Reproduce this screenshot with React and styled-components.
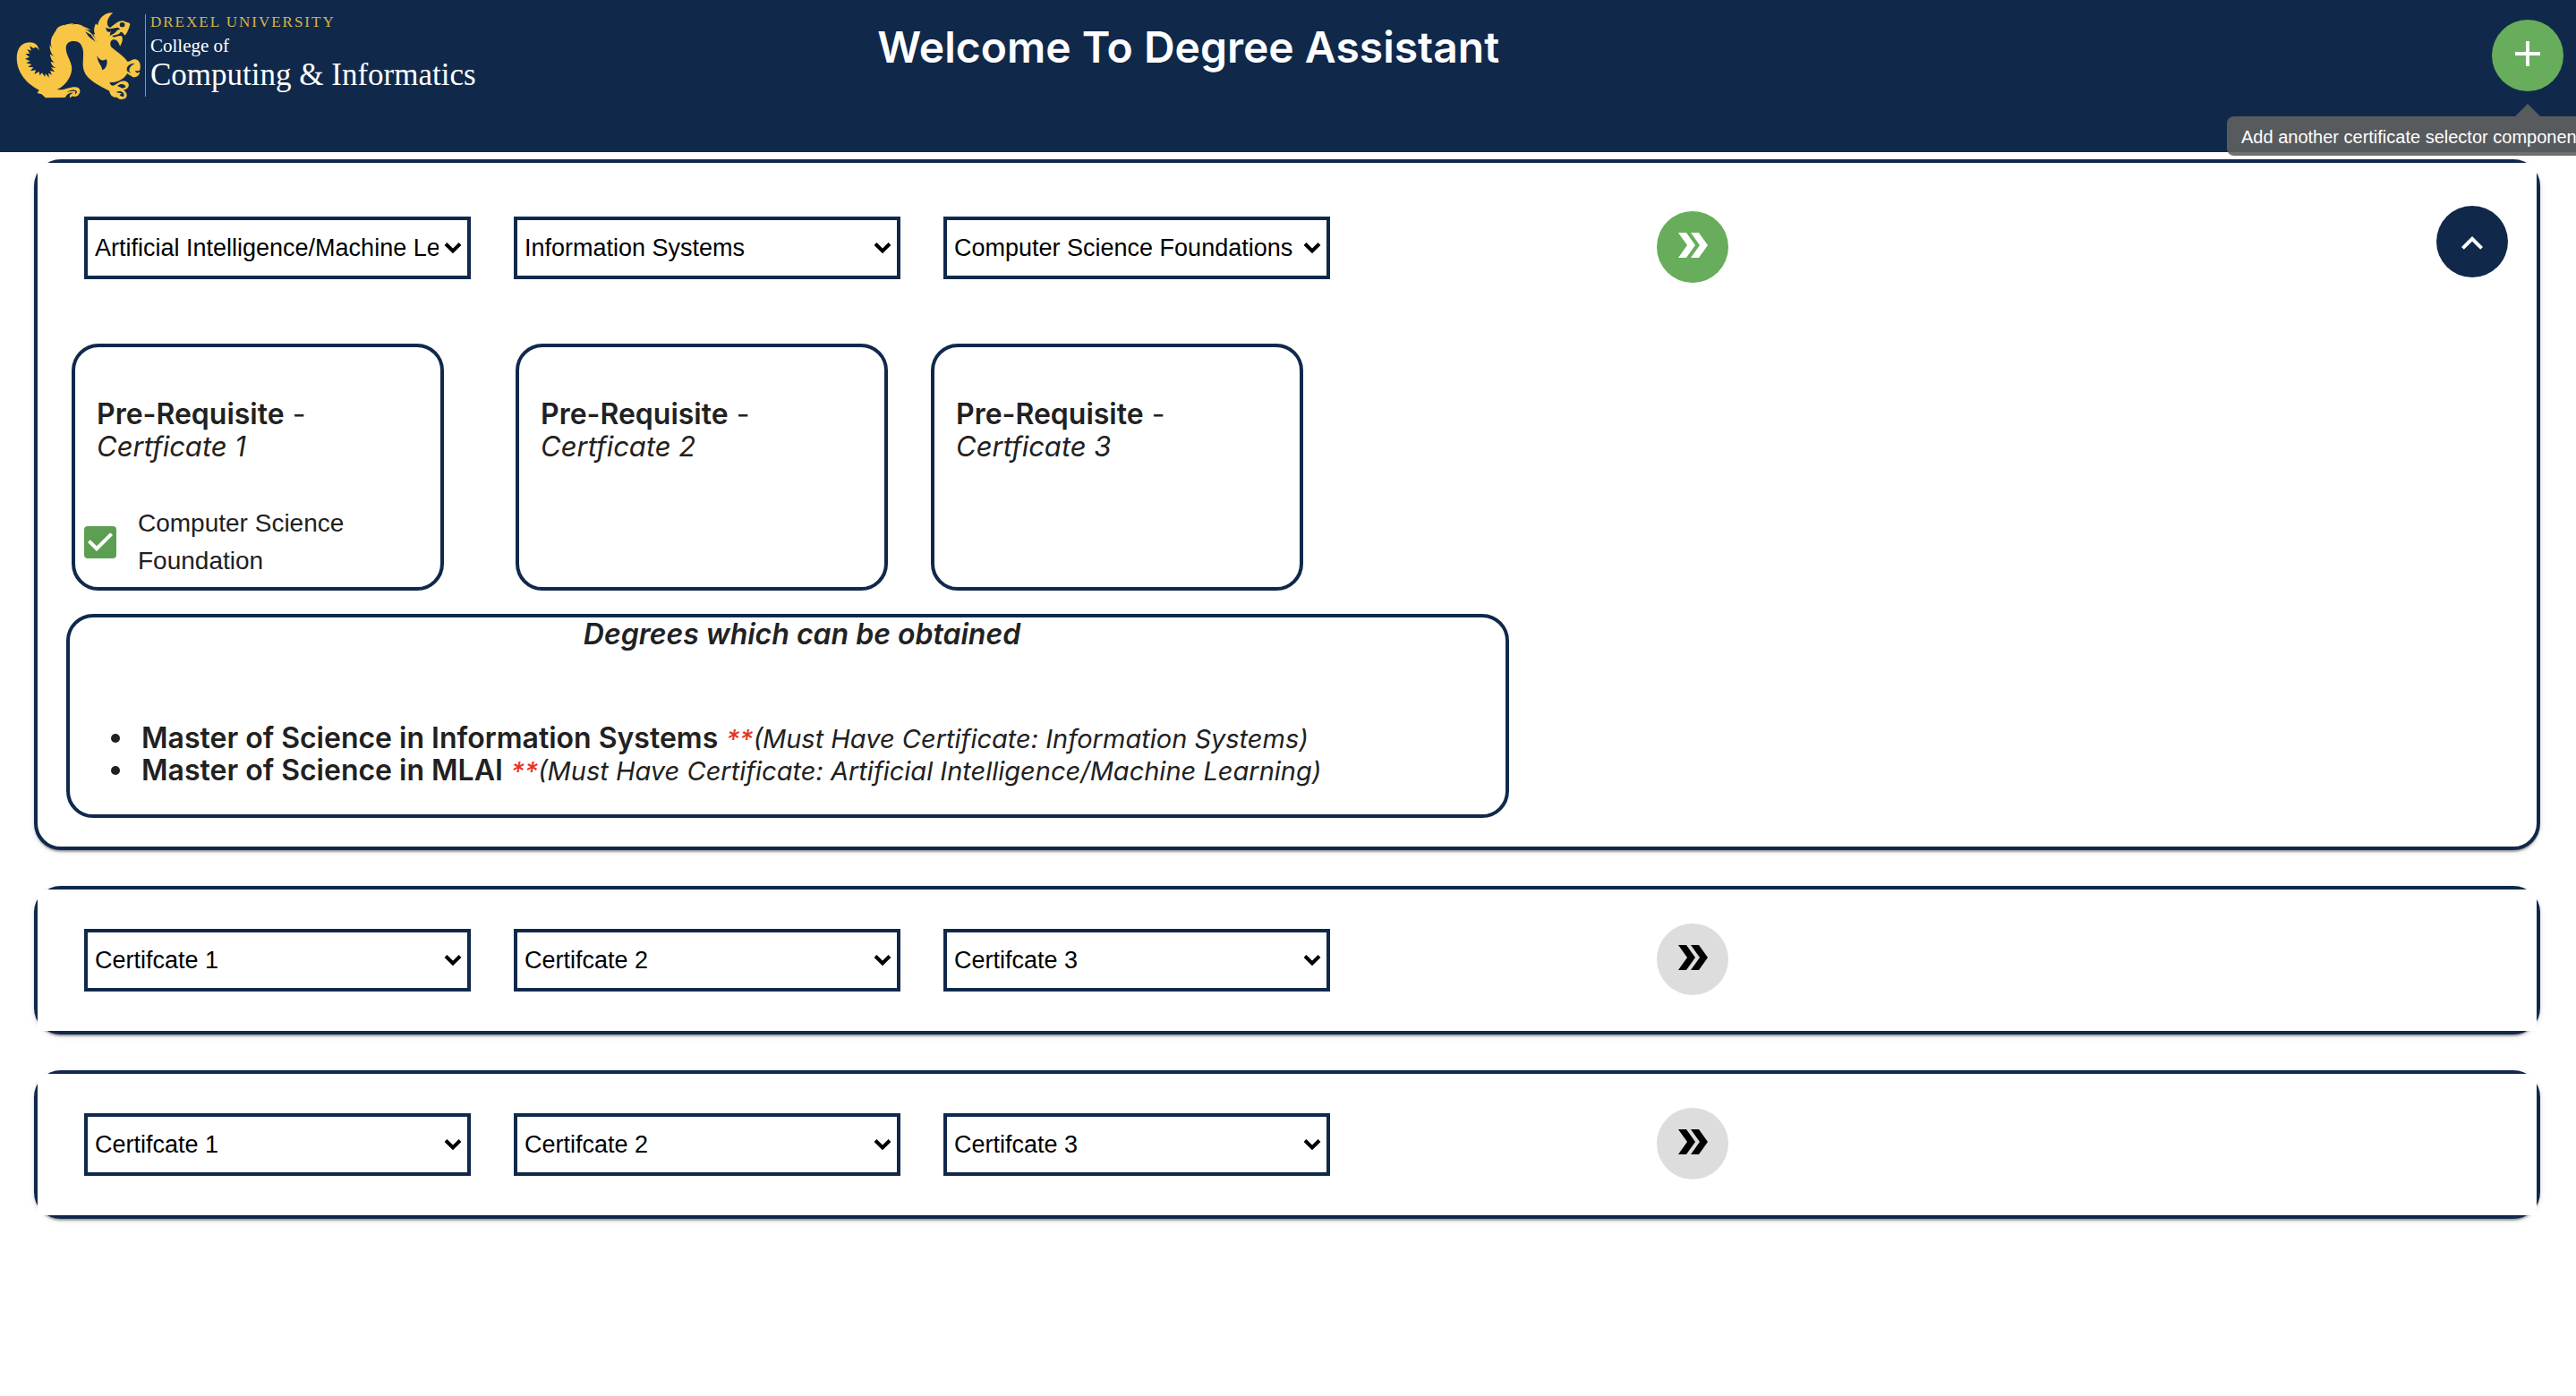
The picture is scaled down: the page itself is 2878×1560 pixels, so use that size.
import React from "react";
import styled, { createGlobalStyle } from "styled-components";

const navy = "#10294b";
const green = "#67ad5b";
const gold = "#f8c545";
const ink = "#212121";
const sans = `Inter, "Noto Sans", sans-serif`;
const arial = `"Liberation Sans", Arial, sans-serif`;
const serif = `"Liberation Serif", Georgia, serif`;

const GlobalStyle = createGlobalStyle`
  *, *::before, *::after { box-sizing: border-box; }
  body {
    margin: 0;
    overflow-x: hidden;
    background: #fff;
    color: ${ink};
    font-family: ${sans};
  }
`;

const Header = styled.header`
  display: grid;
  grid-template-columns: 25fr 46fr auto;
  align-items: start;
  min-height: 170px;
  padding-right: 14px;
  background: ${navy};
`;

const Logo = styled.a`
  display: flex;
  gap: 4px;
  padding: 13px 0 0 18px;
  color: #fff;
  font-family: ${serif};
  text-decoration: none;
`;

const LogoText = styled.span`
  display: flex;
  flex-direction: column;
  height: 92px;
  margin-top: 3px;
  padding-left: 5px;
  border-left: 1px solid #b39545;
`;

const University = styled.span`
  color: #d9b445;
  font-size: 17px;
  line-height: 18px;
  letter-spacing: 2px;
`;

const CollegeOf = styled.span`
  margin-top: 4px;
  font-size: 21px;
  line-height: 26px;
`;

const College = styled.span`
  font-size: 35px;
  line-height: 40px;
  white-space: nowrap;
`;

const Title = styled.h1`
  margin: 25px 0 0;
  color: #fff;
  font-size: 48px;
  font-weight: 600;
  line-height: 56px;
  white-space: nowrap;
`;

const AddArea = styled.div`
  position: relative;
  margin-top: 22px;
`;

const RoundButton = styled.button`
  display: flex;
  align-items: center;
  justify-content: center;
  flex: none;
  width: 80px;
  height: 80px;
  padding: 0 0 4px;
  border: 0;
  border-radius: 50%;
  background: ${(p) => p.$background};
  color: ${(p) => p.$color};
  cursor: pointer;
`;

const CollapseButton = styled(RoundButton)`
  margin-bottom: 6px;
  padding: 4px 0 0;
`;

const Tooltip = styled.div`
  position: absolute;
  top: 108px;
  left: -296px;
  z-index: 2;
  padding: 9px 16px 7px;
  border-radius: 8px;
  background: rgba(97, 97, 97, 0.9);
  color: #fff;
  font-family: ${arial};
  font-size: 20px;
  line-height: 28px;
  white-space: nowrap;

  &::before {
    content: "";
    position: absolute;
    bottom: 100%;
    left: 322px;
    border: 14px solid transparent;
    border-top: 0;
    border-bottom-color: rgba(97, 97, 97, 0.9);
  }
`;

const Main = styled.main`
  display: flex;
  flex-direction: column;
  gap: 40px;
  padding: 8px 40px 40px 38px;
`;

const Panel = styled.section`
  border: 4px solid ${navy};
  border-radius: 30px;
  background: #fff;
  box-shadow: 0 4px 2px -2px rgba(0, 0, 0, 0.2), 0 2px 2px rgba(0, 0, 0, 0.14),
    0 2px 6px rgba(0, 0, 0, 0.12);
`;

const SelectorRow = styled.div`
  display: grid;
  grid-template-columns: 24fr 13fr;
  align-items: end;
  padding: ${(p) => (p.$open ? "48px 32px 68px 52px" : "38px 32px 40px 52px")};
  background: #fff;
`;

const Selectors = styled.div`
  display: flex;
  gap: 48px;
  padding-bottom: 4px;
`;

const SelectBox = styled.div`
  position: relative;
  flex: 0 1 432px;
  min-width: 0;
`;

const Select = styled.select`
  appearance: none;
  display: block;
  width: 100%;
  height: 70px;
  padding: 0 32px 0 8px;
  border: 4px solid ${navy};
  border-radius: 0;
  background: #fff;
  color: #000;
  font-family: ${arial};
  font-size: 27px;
`;

const SelectArrow = styled.svg`
  position: absolute;
  top: 28px;
  right: 10px;
  width: 20px;
  height: 14px;
  pointer-events: none;
`;

const Actions = styled.div`
  display: flex;
  align-items: flex-end;
  justify-content: space-between;
`;

const Prerequisites = styled.div`
  display: flex;
  gap: 48px;
  padding: 0 38px;
`;

const PrerequisiteCard = styled.article`
  flex: 0 1 416px;
  min-height: 276px;
  padding: 57px 10px 8px;
  border: 4px solid ${navy};
  border-radius: 30px;

  &:first-child {
    margin-right: 32px;
  }
`;

const PrerequisiteTitle = styled.h2`
  margin: 0 0 47px;
  padding-left: 14px;
  font-size: 32px;
  font-weight: 400;
  line-height: 36px;
`;

const Strong = styled.strong`
  font-weight: 600;
`;

const CertificateName = styled.em`
  display: block;
  font-size: 31px;
`;

const CourseLabel = styled.label`
  display: flex;
  align-items: center;
  gap: 24px;
  font-family: ${arial};
  font-size: 28px;
  line-height: 42px;
`;

const Tick = styled.span`
  position: relative;
  flex: none;
  width: 36px;
  height: 36px;
`;

const TickBox = styled.input`
  appearance: none;
  display: block;
  width: 36px;
  height: 36px;
  margin: 0;
  border: 4px solid #757575;
  border-radius: 4px;

  &:checked {
    border: 0;
    background: #5d9f52;
  }

  &:not(:checked) + svg {
    display: none;
  }
`;

const TickMark = styled.svg`
  position: absolute;
  inset: 0;
  pointer-events: none;
`;

const Degrees = styled.section`
  width: 1612px;
  max-width: calc(100% - 64px);
  margin: 26px 32px 32px;
  padding: 1px 0 31px;
  border: 4px solid ${navy};
  border-radius: 30px;
`;

const DegreesTitle = styled.h2`
  margin: 0 0 80px;
  padding-left: 32px;
  font-size: 32px;
  font-style: italic;
  font-weight: 600;
  line-height: 36px;
  text-align: center;
`;

const DegreeList = styled.ul`
  margin: 0;
  padding-left: 80px;
  font-size: 32px;
  line-height: 36px;
  list-style: none;
`;

const DegreeItem = styled.li`
  position: relative;

  &::before {
    content: "";
    position: absolute;
    top: 13px;
    left: -34px;
    width: 10px;
    height: 10px;
    border-radius: 50%;
    background: ${ink};
  }
`;

const Requirement = styled.em`
  font-size: 29px;
  line-height: 32px;
`;

const Stars = styled.span`
  color: #eb3223;
  font-weight: 500;
`;

const DragonMark = () => (
  <svg
    width="140"
    height="99"
    viewBox="50 38 392 297"
    preserveAspectRatio="none"
    fill={gold}
    aria-hidden="true"
  >
    <path d="M122 169C120 150 108 141 92 141C64 142 52 165 52 195C53 242 82 280 122 301L116 311L130 315L142 327L203 326L209 317C216 311 224 308 229 311C221 312 215 319 219 328C222 323 226 320 231 322C237 326 248 319 250 306C251 292 238 289 222 292C206 295 192 303 178 299C198 290 216 268 222 245C232 210 206 190 206 160C206 143 218 136 232 137C248 138 255 147 259 165C263 188 255 212 262 235C272 268 312 286 342 304C343 316 352 327 366 325C371 333 386 335 394 326C400 317 393 305 385 300C392 301 399 297 402 288C405 274 392 268 380 271C367 275 363 283 354 286C346 287 343 278 343 275C367 277 386 265 398 245C404 252 407 250 413 256C424 261 436 254 437 240C430 246 424 243 422 236C428 236 434 239 437 234C441 218 438 202 424 198C411 196 408 207 398 205C388 187 365 173 349 158C341 148 345 132 355 132C364 130 370 139 375 154C383 140 386 125 379 119C362 117 362 127 352 122C347 116 365 119 374 111C380 99 386 113 390 118C398 110 404 91 407 79C399 72 392 75 386 69C370 68 360 79 344 92C329 84 333 60 353 42C325 39 309 62 305 84L299 78C293 94 292 103 297 114L292 113C295 124 302 133 306 145C296 120 280 101 261 96L284 101C268 88 250 82 239 87L259 85C242 77 226 79 217 85L231 78C210 78 195 84 190 97L202 82C181 86 173 96 173 112L178 98C166 111 162 122 165 136L164 117C157 136 157 151 163 162L155 149C155 166 159 180 170 188L156 181C158 196 164 207 175 210L158 206C161 217 166 224 176 227L159 225L171 240L156 236L162 250L151 244L153 259L142 246L140 256L131 243L124 252L122 239L107 248L112 234L95 237L104 225L87 223L99 215L81 210L94 204L78 196L92 190L79 180L93 178L84 164L97 169L93 153L104 161C111 154 118 159 122 169Z" />
    <g fill={navy}>
      <path d="M303 185C309 198 319 205 328 199L333 198C338 216 329 232 319 234C321 223 305 211 303 185Z" />
      <path d="M330 91C337 96 343 93 349 97L343 107L334 104Z" />
      <path d="M347 95L369 91L376 97C363 98 365 107 355 112L343 119Z" />
      <circle cx="382" cy="82" r="8" />
      <path d="M397 237C393 221 409 209 421 213C412 216 403 226 404 237L409 245Z" />
      <path d="M363 307C378 300 391 310 387 322C382 324 375 321 374 316L381 313C374 308 368 312 363 307Z" />
      <path d="M367 287C378 277 392 281 393 291L383 295L374 291Z" />
      <path d="M209 309C220 299 236 298 241 307L234 318L236 306C228 302 216 305 209 309Z" />
      <path d="M266 105L285 116L298 139L277 121Z" />
    </g>
  </svg>
);

const AddIcon = () => (
  <svg width="48" height="48" viewBox="0 0 24 24" fill="currentColor" aria-hidden="true">
    <path d="M19 13h-6v6h-2v-6H5v-2h6V5h2v6h6v2z" />
  </svg>
);

const DoubleArrowIcon = () => (
  <svg width="48" height="48" viewBox="0 0 24 24" fill="currentColor" aria-hidden="true">
    <path d="M15.5 5H11l5 7-5 7h4.500l5-7z" />
    <path d="M8.500 5H4l5 7-5 7h4.500l5-7z" />
  </svg>
);

const ExpandLessIcon = () => (
  <svg width="48" height="48" viewBox="0 0 24 24" fill="currentColor" aria-hidden="true">
    <path d="M12 8l-6 6 1.410 1.410L12 10.830l4.590 4.580L18 14z" />
  </svg>
);

const certificates = [
  "Artificial Intelligence/Machine Learning",
  "Information Systems",
  "Computer Science Foundations",
];

function CertificateSelect({ index, value }) {
  const placeholder = `Certifcate ${index}`;
  return (
    <SelectBox>
      <Select aria-label={placeholder} defaultValue={value || placeholder}>
        <option>{placeholder}</option>
        {certificates.map((name) => (
          <option key={name}>{name}</option>
        ))}
      </Select>
      <SelectArrow viewBox="0 0 20 14" fill="none" stroke="#000" strokeWidth="4" aria-hidden="true">
        <path d="M2 2.500L10 10.500L18 2.500" />
      </SelectArrow>
    </SelectBox>
  );
}

function Selector({ values = [], open = false, children }) {
  const ready = values.length > 0;
  return (
    <Panel>
      <SelectorRow $open={open}>
        <Selectors>
          {[1, 2, 3].map((n) => (
            <CertificateSelect key={n} index={n} value={values[n - 1]} />
          ))}
        </Selectors>
        <Actions>
          <RoundButton
            type="button"
            aria-label="Find degrees"
            $background={ready ? green : "#dddddd"}
            $color={ready ? "#fff" : "#000"}
          >
            <DoubleArrowIcon />
          </RoundButton>
          {open && (
            <CollapseButton type="button" aria-label="Collapse" $background={navy} $color="#fff">
              <ExpandLessIcon />
            </CollapseButton>
          )}
        </Actions>
      </SelectorRow>
      {children}
    </Panel>
  );
}

function Prerequisite({ index, course }) {
  const id = `course-${index}`;
  return (
    <PrerequisiteCard>
      <PrerequisiteTitle>
        <Strong>Pre-Requisite</Strong> -
        <CertificateName>Certficate {index}</CertificateName>
      </PrerequisiteTitle>
      {course && (
        <CourseLabel htmlFor={id}>
          <Tick>
            <TickBox id={id} type="checkbox" defaultChecked />
            <TickMark width="36" height="36" viewBox="3 3 18 18" fill="#fff" aria-hidden="true">
              <path d="M10 17l-5-5 1.410-1.410L10 14.170l7.590-7.590L19 8l-9 9z" />
            </TickMark>
          </Tick>
          <span>{course}</span>
        </CourseLabel>
      )}
    </PrerequisiteCard>
  );
}

function Degree({ name, certificate }) {
  return (
    <DegreeItem>
      <Strong>{name}</Strong>{" "}
      <Requirement>
        <Stars>**</Stars>(Must Have Certificate: {certificate})
      </Requirement>
    </DegreeItem>
  );
}

export default function App() {
  return (
    <>
      <GlobalStyle />
      <Header>
        <Logo href="#">
          <DragonMark />
          <LogoText>
            <University>DREXEL UNIVERSITY</University>
            <CollegeOf>College of</CollegeOf>
            <College>Computing &amp; Informatics</College>
          </LogoText>
        </Logo>
        <Title>Welcome To Degree Assistant</Title>
        <AddArea>
          <RoundButton
            type="button"
            aria-label="Add"
            aria-describedby="add-hint"
            $background={green}
            $color="#fff"
          >
            <AddIcon />
          </RoundButton>
          <Tooltip id="add-hint" role="tooltip">
            Add another certificate selector component
          </Tooltip>
        </AddArea>
      </Header>
      <Main>
        <Selector open values={certificates}>
          <Prerequisites>
            <Prerequisite index={1} course="Computer Science Foundation" />
            <Prerequisite index={2} />
            <Prerequisite index={3} />
          </Prerequisites>
          <Degrees>
            <DegreesTitle>Degrees which can be obtained</DegreesTitle>
            <DegreeList>
              <Degree
                name="Master of Science in Information Systems"
                certificate="Information Systems"
              />
              <Degree
                name="Master of Science in MLAI"
                certificate="Artificial Intelligence/Machine Learning"
              />
            </DegreeList>
          </Degrees>
        </Selector>
        <Selector />
        <Selector />
      </Main>
    </>
  );
}
